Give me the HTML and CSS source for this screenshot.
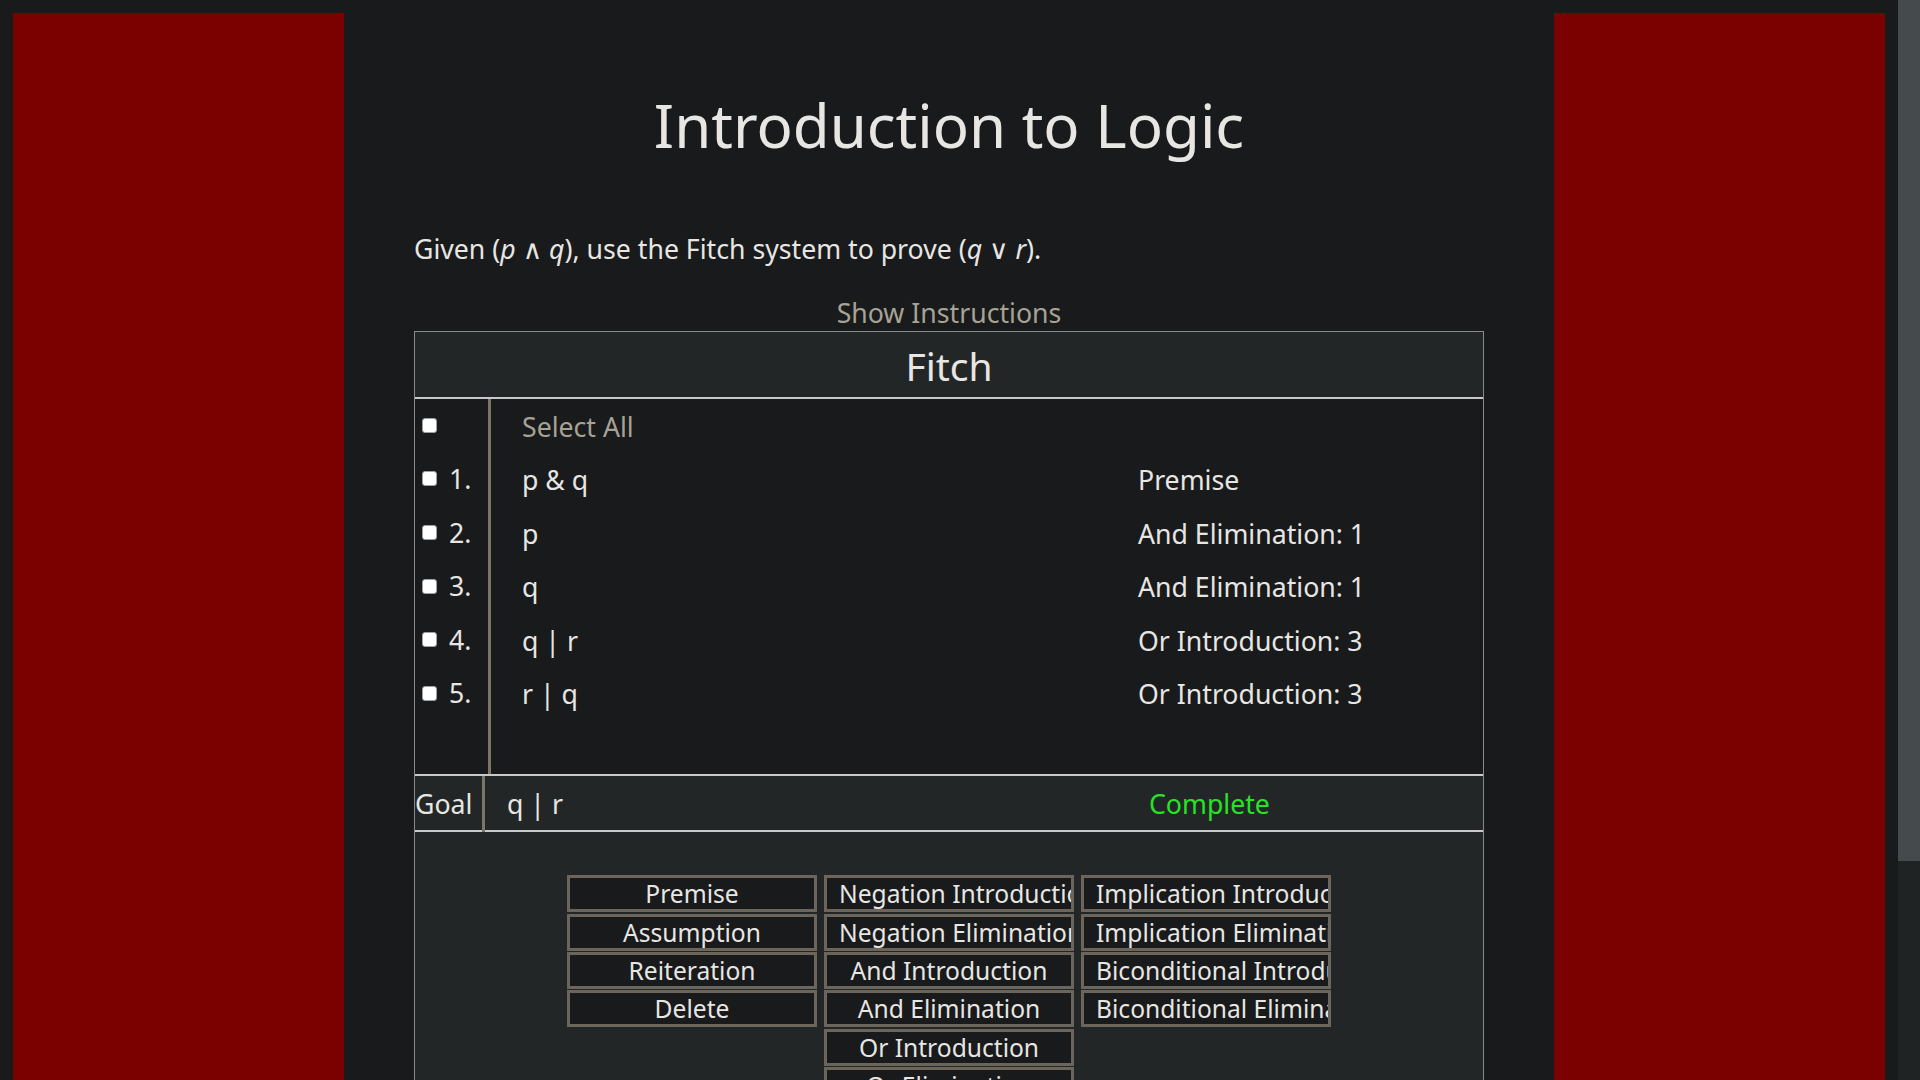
FILE: index.html
```html
<!DOCTYPE html>
<html lang="en">
<head>
<meta charset="utf-8">
<title>Introduction to Logic</title>
<link rel="stylesheet" href="styles.css">
</head>
<body>
<div class="page">
  <aside class="side"></aside>
  <main class="center">
    <h1 class="title">Introduction to Logic</h1>
    <p class="prompt">Given (<i>p</i> ∧ <i>q</i>), use the Fitch system to prove (<i>q</i> ∨ <i>r</i>).</p>
    <div class="show">Show Instructions</div>
    <section class="fitch">
      <div class="fitch-head">Fitch</div>
      <div class="proof">
        <div class="row">
          <div class="num"><span class="cb"></span></div>
          <div class="sent muted">Select All</div>
          <div class="rule"></div>
        </div>
        <div class="row">
          <div class="num"><span class="cb"></span><span>1.</span></div>
          <div class="sent">p &amp; q</div>
          <div class="rule">Premise</div>
        </div>
        <div class="row">
          <div class="num"><span class="cb"></span><span>2.</span></div>
          <div class="sent">p</div>
          <div class="rule">And Elimination: 1</div>
        </div>
        <div class="row">
          <div class="num"><span class="cb"></span><span>3.</span></div>
          <div class="sent">q</div>
          <div class="rule">And Elimination: 1</div>
        </div>
        <div class="row">
          <div class="num"><span class="cb"></span><span>4.</span></div>
          <div class="sent">q | r</div>
          <div class="rule">Or Introduction: 3</div>
        </div>
        <div class="row">
          <div class="num"><span class="cb"></span><span>5.</span></div>
          <div class="sent">r | q</div>
          <div class="rule">Or Introduction: 3</div>
        </div>
        <div class="row">
          <div class="num"></div>
          <div class="sent"></div>
          <div class="rule"></div>
        </div>
      </div>
      <div class="goal">
        <div class="goal-label">Goal</div>
        <div class="goal-sent">q | r</div>
        <div class="goal-status">Complete</div>
      </div>
      <div class="tools">
        <div class="tool-col">
          <button class="btn">Premise</button>
          <button class="btn">Assumption</button>
          <button class="btn">Reiteration</button>
          <button class="btn">Delete</button>
        </div>
        <div class="tool-col">
          <button class="btn">Negation Introduction</button>
          <button class="btn">Negation Elimination</button>
          <button class="btn">And Introduction</button>
          <button class="btn">And Elimination</button>
          <button class="btn">Or Introduction</button>
          <button class="btn">Or Elimination</button>
        </div>
        <div class="tool-col">
          <button class="btn">Implication Introduction</button>
          <button class="btn">Implication Elimination</button>
          <button class="btn">Biconditional Introduction</button>
          <button class="btn">Biconditional Elimination</button>
        </div>
      </div>
    </section>
  </main>
  <aside class="side"></aside>
</div>
<div class="scrollbar"><div class="thumb"></div></div>
</body>
</html>
```

FILE: styles.css
```css
html {
  background: #181a1b;
}

body {
  margin: 0;
  display: flex;
  align-items: stretch;
  background: #181a1b;
  color: #e8e6e3;
  font-family: "Noto Sans", "DejaVu Sans", sans-serif;
  font-size: 26.67px;
}

.page {
  flex: 1 1 auto;
  min-width: 0;
  display: grid;
  grid-template-columns: 331px 1fr 331px;
  padding: 13px;
}

.scrollbar {
  flex: none;
  width: 22px;
  background: #202324;
}

.thumb {
  height: 861px;
  background: #454a4d;
}

.side {
  background: #7b0000;
}

.center {
  padding: 0 70px 190px;
  min-width: 0;
}

.title {
  margin: 71px 0 0;
  font-size: 60px;
  font-weight: 400;
  line-height: normal;
  text-align: center;
}

.prompt {
  margin: 64px 0 0;
  line-height: normal;
}

.show {
  margin-top: 26.5px;
  text-align: center;
  color: #a8a295;
  line-height: normal;
}

.fitch {
  border: 1px solid #8a8a8a;
}

.fitch-head {
  background: #232627;
  height: 65px;
  line-height: 67px;
  text-align: center;
  font-size: 39px;
  border-bottom: 2px solid #c9c9c9;
}

.row {
  display: grid;
  grid-template-columns: 76px 647px 1fr;
  height: 53.6px;
  line-height: 55.6px;
}

.num {
  box-sizing: border-box;
  border-right: 3px solid #7b7468;
  display: flex;
  align-items: center;
  gap: 12px;
  padding-left: 7px;
  height: 53.6px;
}

.cb {
  box-sizing: border-box;
  width: 15px;
  height: 15px;
  background: #ffffff;
  border: 1px solid #a0a0a0;
  border-radius: 3px;
  flex: none;
}

.sent {
  padding-left: 31px;
}

.muted {
  color: #a8a295;
}

.goal {
  display: grid;
  grid-template-columns: 70px 664px 1fr;
  height: 54px;
  line-height: 56px;
  background: #232627;
  border-top: 2px solid #c9c9c9;
  border-bottom: 2px solid #c9c9c9;
}

.goal-label {
  box-sizing: border-box;
  border-right: 3px solid #7b7468;
}

.goal-sent {
  padding-left: 22px;
}

.goal-status {
  color: #26e326;
}

.tools {
  background: #232627;
  padding: 43.5px 0 44px;
  display: flex;
  justify-content: center;
  align-items: flex-start;
  gap: 7px;
}

.tool-col {
  display: flex;
  flex-direction: column;
  gap: 1.4px;
  width: 250px;
}

.btn {
  display: block;
  width: 100%;
  height: 37px;
  box-sizing: border-box;
  margin: 0;
  padding: 0 12px;
  border: 3px solid #6b655b;
  background: #181a1b;
  color: #e8e6e3;
  font-family: "Noto Sans", "DejaVu Sans", sans-serif;
  font-size: 24.6px;
  line-height: 31px;
  text-align: center;
  white-space: nowrap;
  overflow: hidden;
}
```
